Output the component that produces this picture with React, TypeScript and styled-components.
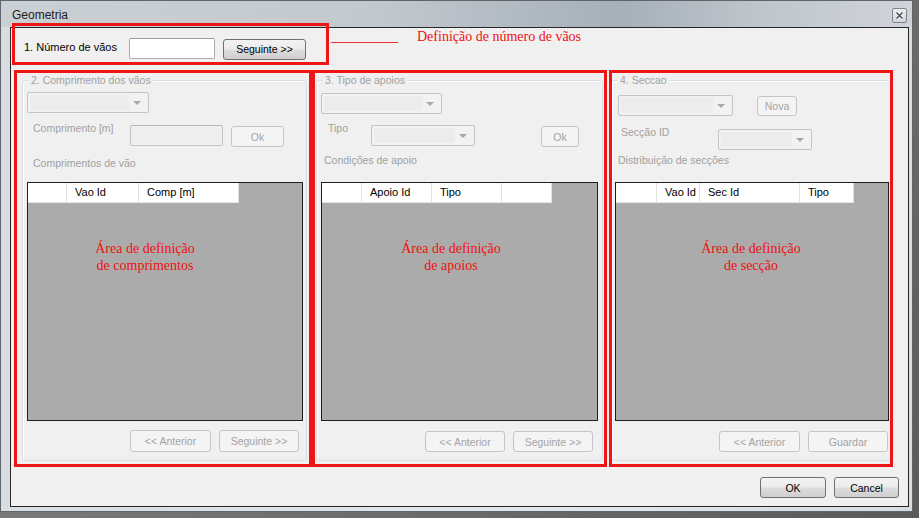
import React from "react";
import styled, { createGlobalStyle } from "styled-components";

const GlobalStyle = createGlobalStyle`
  * { box-sizing: border-box; }
  html, body { margin: 0; padding: 0; background: #5e5e5e; }
  body { font-family: "Liberation Sans", Arial, sans-serif; font-size: 10.5px; color: #000; }
`;

const Stage = styled.div`
  position: relative;
  width: 919px;
  height: 518px;
  overflow: hidden;
  background: linear-gradient(135deg, #8a8a8a 0%, #5a5a5a 100%);
`;

const Window = styled.div`
  width: 913px;
  height: 512px;
  border: 1px solid #5f666b;
  background: linear-gradient(90deg, #d9dde1 0%, #e4e7ea 60%, #d7dce0 100%);
  display: flex;
  flex-direction: column;
`;

const TitleBar = styled.div`
  height: 26px;
  display: flex;
  align-items: center;
  justify-content: space-between;
  padding: 2px 5px 0 11px;
  background: linear-gradient(
    90deg,
    #cbd0d5 0%,
    #c3c9cf 40%,
    #a6b0b9 68%,
    #c0c6cc 84%,
    #d0d4d8 100%
  );
`;

const Title = styled.span`
  font-size: 12px;
  color: #1c1c1c;
`;

const CloseBox = styled.div`
  width: 15px;
  height: 15px;
  border: 1px solid #7c858d;
  border-radius: 2px;
  background: linear-gradient(#eef0f2, #cfd4d8);
  display: flex;
  align-items: center;
  justify-content: center;
`;

const Client = styled.div`
  margin: 0 3px 0 9px;
  height: 480px;
  border: 1px solid #262626;
  background: #f0f0f0;
  display: flex;
  flex-direction: column;
  padding-bottom: 8px;
`;

const TopRow = styled.div`
  display: flex;
  align-items: center;
  height: 31px;
  padding: 10px 0 0 13px;
`;

const TopLabel = styled.span`
  width: 105px;
  margin-top: -4px;
  font-size: 11px;
`;

const TextBox = styled.div<{ $w: number; $disabled?: boolean }>`
  width: ${(p) => p.$w}px;
  height: 21px;
  border: 1px solid ${(p) => (p.$disabled ? "#c2c4c6" : "#abadb3")};
  border-top-color: ${(p) => (p.$disabled ? "#b5b7b9" : "#9a9da3")};
  border-radius: 2px;
  background: ${(p) => (p.$disabled ? "#efefef" : "#fff")};
`;

const Btn = styled.div<{ $w: number; $disabled?: boolean; $mt?: number; $ml?: number; $h?: number }>`
  width: ${(p) => p.$w}px;
  height: ${(p) => p.$h ?? 21}px;
  margin-top: ${(p) => p.$mt ?? 0}px;
  margin-left: ${(p) => p.$ml ?? 0}px;
  display: flex;
  align-items: center;
  justify-content: center;
  border-radius: 3px;
  border: 1px solid ${(p) => (p.$disabled ? "#c3c6c9" : "#707070")};
  color: ${(p) => (p.$disabled ? "#a3a3a3" : "#000")};
  background: ${(p) =>
    p.$disabled
      ? "#f4f4f4"
      : "linear-gradient(#f3f3f3 0%, #ebebeb 48%, #dddddd 52%, #cfcfcf 100%)"};
  font-size: 10.5px;
`;

const Combo = styled.div<{ $w: number }>`
  position: relative;
  width: ${(p) => p.$w}px;
  height: 21px;
  border: 1px solid #c2c4c6;
  border-radius: 2px;
  background: #f2f2f2;

  &::before {
    content: "";
    position: absolute;
    left: 2px;
    top: 2px;
    bottom: 2px;
    right: 19px;
    background: #ececec;
  }

  &::after {
    content: "";
    position: absolute;
    right: 7px;
    top: 8px;
    border-left: 4px solid transparent;
    border-right: 4px solid transparent;
    border-top: 4px solid #a8a8a8;
  }
`;

const GroupRow = styled.div`
  display: flex;
  margin-top: 21px;
`;

const Group = styled.div<{ $w: number; $ml: number }>`
  position: relative;
  width: ${(p) => p.$w}px;
  height: 381px;
  margin-left: ${(p) => p.$ml}px;
  border: 1px solid #d5dfe5;
  border-radius: 3px;
  box-shadow: inset 1px 1px 0 #fff;
  display: flex;
  flex-direction: column;
`;

const Legend = styled.span`
  position: absolute;
  top: -8px;
  left: 6px;
  padding: 0 2px;
  background: #f0f0f0;
  color: #a0a0a0;
  line-height: 14px;
`;

const Row = styled.div<{ $mt: number; $ml: number }>`
  display: flex;
  align-items: flex-start;
  margin-top: ${(p) => p.$mt}px;
  margin-left: ${(p) => p.$ml}px;
`;

const FieldLabel = styled.span<{ $w: number }>`
  width: ${(p) => p.$w}px;
  margin-top: -4px;
  line-height: 14px;
  color: #a0a0a0;
`;

const Caption = styled.div<{ $mt: number; $ml: number }>`
  margin-top: ${(p) => p.$mt}px;
  margin-left: ${(p) => p.$ml}px;
  line-height: 14px;
  color: #a0a0a0;
`;

const Grid = styled.div<{ $w: number; $mt: number; $ml: number }>`
  position: relative;
  width: ${(p) => p.$w}px;
  height: 239px;
  margin-top: ${(p) => p.$mt}px;
  margin-left: ${(p) => p.$ml}px;
  border: 1px solid #1e1e1e;
  background: #ababab;
`;

const HeaderRow = styled.div`
  display: flex;
  height: 20px;
`;

const HeaderCell = styled.div<{ $w: number }>`
  width: ${(p) => p.$w}px;
  height: 20px;
  padding-left: 8px;
  line-height: 19px;
  font-size: 11px;
  background: #fff;
  border-right: 1px solid #e0e0e0;
  border-bottom: 1px solid #e6e6e6;
  white-space: nowrap;
`;

const NavRow = styled.div<{ $mt: number; $pr: number }>`
  display: flex;
  justify-content: flex-end;
  gap: 8px;
  margin-top: ${(p) => p.$mt}px;
  padding-right: ${(p) => p.$pr}px;
`;

const BottomRow = styled.div`
  display: flex;
  justify-content: flex-end;
  gap: 8px;
  margin-top: 16px;
  padding-right: 9px;
`;

/* red annotations drawn over the dialog */
const AnnoBox = styled.div<{ $x: number; $y: number; $w: number; $h: number }>`
  position: absolute;
  left: ${(p) => p.$x}px;
  top: ${(p) => p.$y}px;
  width: ${(p) => p.$w}px;
  height: ${(p) => p.$h}px;
  border: 3px solid #f01515;
  pointer-events: none;
`;

const AnnoLine = styled.div`
  position: absolute;
  left: 331px;
  top: 42px;
  width: 67px;
  height: 1px;
  background: #f03030;
`;

const AnnoNote = styled.div`
  position: absolute;
  left: 417px;
  top: 29px;
  font-family: "Liberation Serif", "Times New Roman", serif;
  font-size: 14px;
  line-height: 16px;
  color: #ee1111;
  white-space: nowrap;
`;

const GridNote = styled.div<{ $x: number }>`
  position: absolute;
  left: ${(p) => p.$x}px;
  top: 57px;
  width: 130px;
  text-align: center;
  font-family: "Liberation Serif", "Times New Roman", serif;
  font-size: 14px;
  line-height: 17px;
  color: #ee1111;
`;

type Col = { w: number; label: string };

const DataGrid = ({
  w,
  mt,
  ml,
  cols,
  note,
  noteX,
}: {
  w: number;
  mt: number;
  ml: number;
  cols: Col[];
  note: string[];
  noteX: number;
}) => (
  <Grid $w={w} $mt={mt} $ml={ml}>
    <HeaderRow>
      {cols.map((c, i) => (
        <HeaderCell key={i} $w={c.w}>
          {c.label}
        </HeaderCell>
      ))}
    </HeaderRow>
    <GridNote $x={noteX}>
      {note[0]}
      <br />
      {note[1]}
    </GridNote>
  </Grid>
);

const CloseIcon = () => (
  <svg width="9" height="9" viewBox="0 0 9 9">
    <path d="M1.5 1.5 L7.5 7.5 M7.5 1.5 L1.5 7.5" stroke="#fff" strokeWidth="3.2" />
    <path d="M1.5 1.5 L7.5 7.5 M7.5 1.5 L1.5 7.5" stroke="#4a4f55" strokeWidth="1.6" />
  </svg>
);

export default function App() {
  return (
    <Stage>
      <GlobalStyle />
      <Window>
        <TitleBar>
          <Title>Geometria</Title>
          <CloseBox>
            <CloseIcon />
          </CloseBox>
        </TitleBar>
        <Client>
          <TopRow>
            <TopLabel>1. Número de vãos</TopLabel>
            <TextBox $w={86} />
            <Btn $w={83} $ml={8} $mt={1}>
              Seguinte &gt;&gt;
            </Btn>
          </TopRow>

          <GroupRow>
            <Group $w={285} $ml={11}>
              <Legend>2. Comprimento dos vãos</Legend>
              <Row $mt={11} $ml={4}>
                <Combo $w={122} />
              </Row>
              <Row $mt={12} $ml={10}>
                <FieldLabel $w={97}>Comprimento [m]</FieldLabel>
                <TextBox $w={93} $disabled />
                <Btn $w={53} $ml={8} $mt={1} $disabled>
                  Ok
                </Btn>
              </Row>
              <Caption $mt={9} $ml={10}>
                Comprimentos de vão
              </Caption>
              <DataGrid
                w={276}
                mt={12}
                ml={4}
                cols={[
                  { w: 39, label: "" },
                  { w: 72, label: "Vao Id" },
                  { w: 100, label: "Comp [m]" },
                ]}
                note={["Área de definição", "de comprimentos"]}
                noteX={52}
              />
              <NavRow $mt={9} $pr={7}>
                <Btn $w={81} $h={22} $disabled>
                  &lt;&lt; Anterior
                </Btn>
                <Btn $w={80} $h={22} $disabled>
                  Seguinte &gt;&gt;
                </Btn>
              </NavRow>
            </Group>

            <Group $w={287} $ml={9}>
              <Legend>3. Tipo de apoios</Legend>
              <Row $mt={12} $ml={4}>
                <Combo $w={121} />
              </Row>
              <Row $mt={11} $ml={11}>
                <FieldLabel $w={43}>Tipo</FieldLabel>
                <Combo $w={104} />
                <Btn $w={38} $ml={66} $mt={1} $disabled>
                  Ok
                </Btn>
              </Row>
              <Caption $mt={6} $ml={7}>
                Condições de apoio
              </Caption>
              <DataGrid
                w={277}
                mt={15}
                ml={4}
                cols={[
                  { w: 40, label: "" },
                  { w: 70, label: "Apoio Id" },
                  { w: 70, label: "Tipo" },
                  { w: 50, label: "" },
                ]}
                note={["Área de definição", "de apoios"]}
                noteX={64}
              />
              <NavRow $mt={10} $pr={9}>
                <Btn $w={80} $disabled>
                  &lt;&lt; Anterior
                </Btn>
                <Btn $w={80} $disabled>
                  Seguinte &gt;&gt;
                </Btn>
              </NavRow>
            </Group>

            <Group $w={281} $ml={8}>
              <Legend>4. Seccao</Legend>
              <Row $mt={14} $ml={6}>
                <Combo $w={115} />
                <Btn $w={40} $h={20} $ml={24} $mt={1} $disabled>
                  Nova
                </Btn>
              </Row>
              <Row $mt={13} $ml={9}>
                <FieldLabel $w={97}>Secção ID</FieldLabel>
                <Combo $w={94} />
              </Row>
              <Caption $mt={3} $ml={6}>
                Distribuição de secções
              </Caption>
              <DataGrid
                w={274}
                mt={15}
                ml={3}
                cols={[
                  { w: 41, label: "" },
                  { w: 43, label: "Vao Id" },
                  { w: 100, label: "Sec Id" },
                  { w: 54, label: "Tipo" },
                ]}
                note={["Área de definição", "de secção"]}
                noteX={70}
              />
              <NavRow $mt={10} $pr={3}>
                <Btn $w={81} $disabled>
                  &lt;&lt; Anterior
                </Btn>
                <Btn $w={80} $disabled>
                  Guardar
                </Btn>
              </NavRow>
            </Group>
          </GroupRow>

          <BottomRow>
            <Btn $w={66}>OK</Btn>
            <Btn $w={65}>Cancel</Btn>
          </BottomRow>
        </Client>
      </Window>

      <AnnoBox $x={12} $y={23} $w={317} $h={42} />
      <AnnoLine />
      <AnnoNote>Definição de número de vãos</AnnoNote>
      <AnnoBox $x={14} $y={70} $w={298} $h={397} />
      <AnnoBox $x={312} $y={70} $w={295} $h={397} />
      <AnnoBox $x={609} $y={70} $w={284} $h={397} />
    </Stage>
  );
}
